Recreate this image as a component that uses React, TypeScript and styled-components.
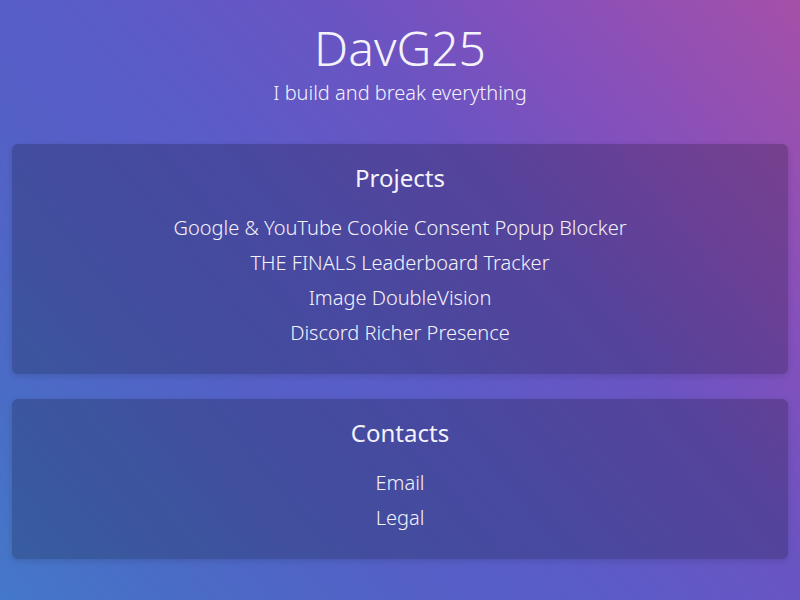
import React from 'react';
import styled, { createGlobalStyle } from 'styled-components';

const GlobalStyle = createGlobalStyle`
  html, body {
    margin: 0;
    padding: 0;
    height: 100%;
  }
  body {
    font-family: 'Noto Sans', 'Open Sans', sans-serif;
    color: #f4f2fb;
    background: linear-gradient(
      50deg,
      #4478c8 0%,
      #4a6cc6 14%,
      #5460c6 32%,
      #5a5cc8 45%,
      #6a54c2 64%,
      #8450bc 78%,
      #a550a8 100%
    );
    background-attachment: fixed;
    min-height: 100vh;
  }
`;

const Page = styled.main`
  display: flex;
  flex-direction: column;
  padding: 20px 12px 12px;
  box-sizing: border-box;
  min-height: 100vh;
`;

const Header = styled.header`
  display: flex;
  flex-direction: column;
  align-items: center;
  margin-bottom: 36px;
`;

const Title = styled.h1`
  margin: 0;
  font-size: 48px;
  line-height: 56px;
  font-weight: 300;
`;

const Subtitle = styled.p`
  margin: 2px 0 0;
  font-size: 20px;
  line-height: 30px;
  font-weight: 300;
`;

const Sections = styled.div`
  display: flex;
  flex-direction: column;
  gap: 25px;
`;

const Card = styled.section`
  display: flex;
  flex-direction: column;
  align-items: center;
  padding: 16px 20px 24px;
  border-radius: 6px;
  background: rgba(0, 0, 0, 0.2);
  box-shadow: 0 2px 6px rgba(0, 0, 0, 0.12);
`;

const CardTitle = styled.h2`
  margin: 0 0 14px;
  font-size: 24px;
  line-height: 36px;
  font-weight: 400;
`;

const LinkList = styled.ul`
  list-style: none;
  margin: 0;
  padding: 0;
  display: flex;
  flex-direction: column;
  align-items: center;
`;

const LinkItem = styled.li`
  font-size: 20px;
  line-height: 35px;
  font-weight: 300;
  a {
    color: inherit;
    text-decoration: none;
  }
`;

const sections = [
  {
    title: 'Projects',
    links: [
      'Google & YouTube Cookie Consent Popup Blocker',
      'THE FINALS Leaderboard Tracker',
      'Image DoubleVision',
      'Discord Richer Presence',
    ],
  },
  {
    title: 'Contacts',
    links: ['Email', 'Legal'],
  },
];

export default function App() {
  return (
    <>
      <GlobalStyle />
      <Page>
        <Header>
          <Title>DavG25</Title>
          <Subtitle>I build and break everything</Subtitle>
        </Header>
        <Sections>
          {sections.map((s) => (
            <Card key={s.title}>
              <CardTitle>{s.title}</CardTitle>
              <LinkList>
                {s.links.map((l) => (
                  <LinkItem key={l}>
                    <a href="#">{l}</a>
                  </LinkItem>
                ))}
              </LinkList>
            </Card>
          ))}
        </Sections>
      </Page>
    </>
  );
}
